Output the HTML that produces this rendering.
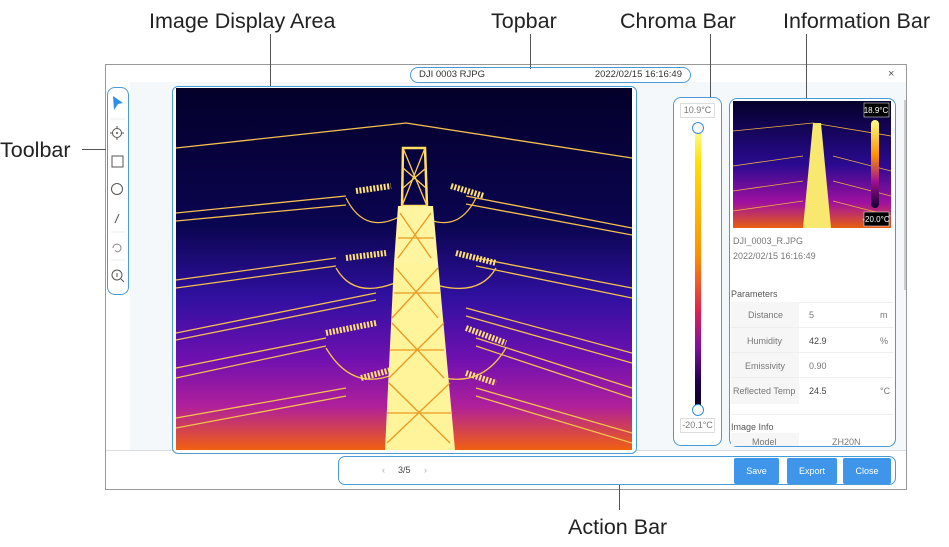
<!DOCTYPE html>
<html><head><meta charset="utf-8"><style>
*{box-sizing:border-box;margin:0;padding:0}
body{width:949px;height:547px;background:#fff;position:relative;overflow:hidden;font-family:"Liberation Sans",sans-serif;color:#333}
.a{position:absolute}
.lbl{font-size:21.5px;color:#222;white-space:nowrap}
.bl{border:1.5px solid #4a9ad6}
.ln{background:#555}
.t{font-size:9px;color:#777;position:absolute;white-space:nowrap}
.btn{position:absolute;top:458px;height:26px;background:#3e95ea;color:#fff;font-size:9px;text-align:center;line-height:26px;border-radius:2px}
</style></head><body>
<div class="a lbl" style="left:149px;top:9px">Image Display Area</div>
<div class="a lbl" style="left:491px;top:9px">Topbar</div>
<div class="a lbl" style="left:620px;top:9px">Chroma Bar</div>
<div class="a lbl" style="left:783px;top:9px">Information Bar</div>
<div class="a lbl" style="left:0px;top:138px">Toolbar</div>
<div class="a lbl" style="left:568px;top:515px">Action Bar</div>
<div class="a" style="left:105px;top:64px;width:802px;height:426px;border:1px solid #999;background:#fff"></div>
<div class="a" style="left:130px;top:82px;width:776px;height:368px;background:#f5f8fb"></div>
<div class="a" style="left:106px;top:450px;width:800px;height:1px;background:#ddd"></div>
<div class="a ln" style="left:270px;top:34px;width:1px;height:56px"></div>
<div class="a" style="left:267px;top:88px;width:6px;height:6px;border-radius:50%;border:1px solid #555;background:#fff"></div>
<div class="a ln" style="left:530px;top:34px;width:1px;height:35px"></div>
<div class="a ln" style="left:710px;top:34px;width:1px;height:63px"></div>
<div class="a ln" style="left:806px;top:34px;width:1px;height:64px"></div>
<div class="a ln" style="left:82px;top:149px;width:24px;height:1px"></div>
<div class="a ln" style="left:619px;top:480px;width:1px;height:30px"></div>
<div class="a bl" style="left:410px;top:67px;width:281px;height:16px;border-radius:9px;font-size:9.5px;color:#333;line-height:13px;padding:0 8px">DJI 0003 RJPG<span style="float:right">2022/02/15 16:16:49</span></div>
<div class="a" style="left:888px;top:68px;font-size:11px;color:#555">×</div>
<div class="a bl" style="left:107px;top:87px;width:22px;height:208px;border-radius:8px;background:#fff"></div>
<svg class="a" style="left:107px;top:87px" width="22" height="208" viewBox="0 0 22 208">
<path d="M6 9 L16 16 L11 17 L7 23 Z" fill="#2f8fe6"/>
<line x1="4" y1="32" x2="18" y2="32" stroke="#eee"/>
<circle cx="10" cy="46" r="4.5" fill="none" stroke="#555"/><circle cx="10" cy="46" r="1" fill="#555"/>
<path d="M10 39v3M10 50v3M3 46h3M14 46h3" stroke="#555"/>
<rect x="5" y="69" width="11" height="11" fill="none" stroke="#555"/>
<circle cx="10" cy="102" r="5.5" fill="none" stroke="#555"/>
<line x1="8" y1="136" x2="12" y2="127" stroke="#555"/>
<line x1="4" y1="145" x2="18" y2="145" stroke="#eee"/>
<path d="M6 161 A4 4 0 1 1 10 165 M10 165 l-2 -1.5 M14 161 A4 4 0 0 0 10 157" fill="none" stroke="#888"/>
<line x1="4" y1="173" x2="18" y2="173" stroke="#eee"/>
<circle cx="10" cy="188" r="5" fill="none" stroke="#555"/><line x1="14" y1="192" x2="17" y2="195" stroke="#555"/><line x1="10" y1="186" x2="10" y2="190" stroke="#555"/>
</svg>
<div class="a bl" style="left:172px;top:86px;width:465px;height:368px;border-radius:6px;background:#fff"></div>
<svg class="a" style="left:176px;top:88px" width="456" height="362" viewBox="0 0 456 362">
<defs><linearGradient id="g" x1="0" y1="0" x2="0" y2="1">
<stop offset="0" stop-color="#04002a"/><stop offset="0.38" stop-color="#0a0550"/><stop offset="0.58" stop-color="#3010a0"/><stop offset="0.75" stop-color="#7010b0"/><stop offset="0.88" stop-color="#b0209a"/><stop offset="1" stop-color="#f06010"/></linearGradient></defs>
<rect width="456" height="362" fill="url(#g)"/>
<g stroke="#f5c050" stroke-width="1.3" fill="none">
<path d="M0 60 L230 35 L456 70"/>
<path d="M0 125 L170 108 M0 133 L170 117 M290 108 L456 140 M290 116 L456 147"/>
<path d="M0 192 L160 170 M0 200 L160 178 M300 170 L456 200 M300 178 L456 210"/>
<path d="M0 245 L200 205 M0 252 L200 212 M290 220 L456 265 M290 228 L456 275"/>
<path d="M0 280 L150 250 M0 290 L150 258 M300 250 L456 300 M300 258 L456 310"/>
<path d="M0 330 L170 300 M0 340 L170 308 M300 300 L456 345 M300 308 L456 355"/>
<path d="M170 110 Q190 150 230 125 M300 110 Q280 150 240 125 M160 180 Q180 215 230 190 M320 180 Q300 215 240 190 M150 260 Q180 310 230 280 M330 260 Q300 310 240 280"/>
</g>
<g stroke="#ffe070" stroke-width="6" fill="none" stroke-dasharray="2 1.5">
<path d="M180 103 L215 98 M275 98 L308 108 M170 170 L210 165 M280 165 L320 175 M150 245 L200 235 M290 240 L330 255 M185 290 L215 282 M290 285 L320 295"/>
</g>
<polygon points="227,60 249,60 251,118 226,118" fill="none" stroke="#ffe060" stroke-width="2.5"/>
<path d="M227 60 L251 118 M249 60 L226 118 M227 80 L250 100 M250 80 L227 100" stroke="#ffd050" stroke-width="1.3"/>
<polygon points="222,118 257,118 262,175 218,175" fill="#fff4a0"/>
<polygon points="218,175 262,175 279,362 209,362" fill="#fff49a"/>
<g stroke="#e89a20" stroke-width="1.3"><path d="M224 125 L255 170 M255 125 L222 170 M220 180 L262 230 M262 180 L216 230 M216 235 L268 290 M268 235 L213 290 M213 295 L274 355 M274 295 L211 355 M222 150 h36 M218 205 h46 M214 262 h54 M211 325 h64"/></g>
</svg>
<div class="a bl" style="left:673px;top:97px;width:49px;height:349px;border-radius:8px;background:#fff"></div>
<div class="a" style="left:680px;top:103px;width:35px;height:15px;border:1px solid #ddd;font-size:9px;color:#777;text-align:center;line-height:13px">10.9°C</div>
<div class="a" style="left:695px;top:129px;width:6px;height:280px;background:linear-gradient(#ffff90,#ffe000 12%,#ff9000 45%,#e02050 65%,#8010a0 78%,#200050 90%,#05001a)"></div>
<div class="a" style="left:692px;top:122px;width:12px;height:12px;border-radius:50%;border:1.5px solid #3a8fd8;background:#fff"></div>
<div class="a" style="left:692px;top:404px;width:12px;height:12px;border-radius:50%;border:1.5px solid #3a8fd8;background:#fff"></div>
<div class="a" style="left:680px;top:418px;width:35px;height:15px;border:1px solid #ddd;font-size:9px;color:#777;text-align:center;line-height:13px">-20.1°C</div>
<div class="a bl" style="left:729px;top:98px;width:167px;height:349px;border-radius:8px;background:#fff;overflow:hidden"></div>
<div class="a" style="left:904px;top:100px;width:2px;height:190px;background:#ccc"></div>
<svg class="a" style="left:733px;top:101px" width="158" height="127" viewBox="0 0 158 127">
<defs><linearGradient id="g2" x1="0" y1="0" x2="0" y2="1"><stop offset="0" stop-color="#03002a"/><stop offset="0.5" stop-color="#2a0a90"/><stop offset="0.8" stop-color="#a010a0"/><stop offset="1" stop-color="#e86010"/></linearGradient>
<linearGradient id="g3" x1="0" y1="0" x2="0" y2="1"><stop offset="0" stop-color="#ffff80"/><stop offset="0.4" stop-color="#ff9000"/><stop offset="0.7" stop-color="#a01090"/><stop offset="1" stop-color="#100030"/></linearGradient></defs>
<rect width="158" height="127" fill="url(#g2)"/>
<g stroke="#f0b040" stroke-width="0.8" fill="none"><path d="M0 30 L80 22 L158 35 M0 65 L70 55 M100 55 L158 70 M0 90 L70 80 M100 80 L158 95 M0 110 L70 100 M100 100 L158 115"/></g>
<polygon points="80,22 88,22 98,127 70,127" fill="#f8e870"/>
<rect x="131" y="2" width="25" height="14" fill="#000" stroke="#fff" stroke-width="0.5"/>
<text x="143" y="12" font-size="8" fill="#fff" text-anchor="middle" font-family="Liberation Sans">18.9°C</text>
<rect x="138" y="19" width="8" height="88" rx="4" fill="url(#g3)"/>
<rect x="131" y="111" width="25" height="14" fill="#000" stroke="#fff" stroke-width="0.5"/>
<text x="143" y="121" font-size="8" fill="#fff" text-anchor="middle" font-family="Liberation Sans">-20.0°C</text>
</svg>
<div class="t" style="left:733px;top:236px">DJI_0003_R.JPG</div>
<div class="t" style="left:733px;top:251px">2022/02/15 16:16:49</div>
<div class="t" style="left:731px;top:289px;color:#555">Parameters</div>
<div class="a" style="left:731px;top:302px;width:163px;height:102px;border-top:1px solid #eee"></div>
<div class="a" style="left:731px;top:302px;width:68px;height:102px;background:#f6f6f6"></div>
<div class="a" style="left:731px;top:327px;width:163px;height:1px;background:#eee"></div>
<div class="a" style="left:731px;top:352px;width:163px;height:1px;background:#eee"></div>
<div class="a" style="left:731px;top:377px;width:163px;height:1px;background:#eee"></div>
<div class="a" style="left:731px;top:414px;width:163px;height:1px;background:#eee"></div>
<div class="t" style="left:748px;top:310px">Distance</div><div class="t" style="left:809px;top:310px">5</div><div class="t" style="left:880px;top:310px">m</div>
<div class="t" style="left:747px;top:336px">Humidity</div><div class="t" style="left:809px;top:336px;color:#444">42.9</div><div class="t" style="left:880px;top:336px">%</div>
<div class="t" style="left:745px;top:361px">Emissivity</div><div class="t" style="left:809px;top:361px">0.90</div>
<div class="t" style="left:733px;top:386px">Reflected Temp</div><div class="t" style="left:809px;top:386px;color:#444">24.5</div><div class="t" style="left:880px;top:386px">°C</div>
<div class="t" style="left:731px;top:422px;color:#555">Image Info</div>
<div class="a" style="left:731px;top:433px;width:68px;height:13px;background:#f6f6f6"></div>
<div class="t" style="left:752px;top:437px">Model</div><div class="t" style="left:832px;top:437px">ZH20N</div>
<div class="a bl" style="left:338px;top:456px;width:558px;height:29px;border-radius:7px;background:#fff"></div>
<div class="t" style="left:382px;top:465px;color:#aaa">‹</div>
<div class="t" style="left:398px;top:465px;color:#444">3/5</div>
<div class="t" style="left:424px;top:465px;color:#aaa">›</div>
<div class="btn" style="left:734px;width:45px">Save</div>
<div class="btn" style="left:787px;width:50px">Export</div>
<div class="btn" style="left:843px;width:48px">Close</div>
</body></html>
